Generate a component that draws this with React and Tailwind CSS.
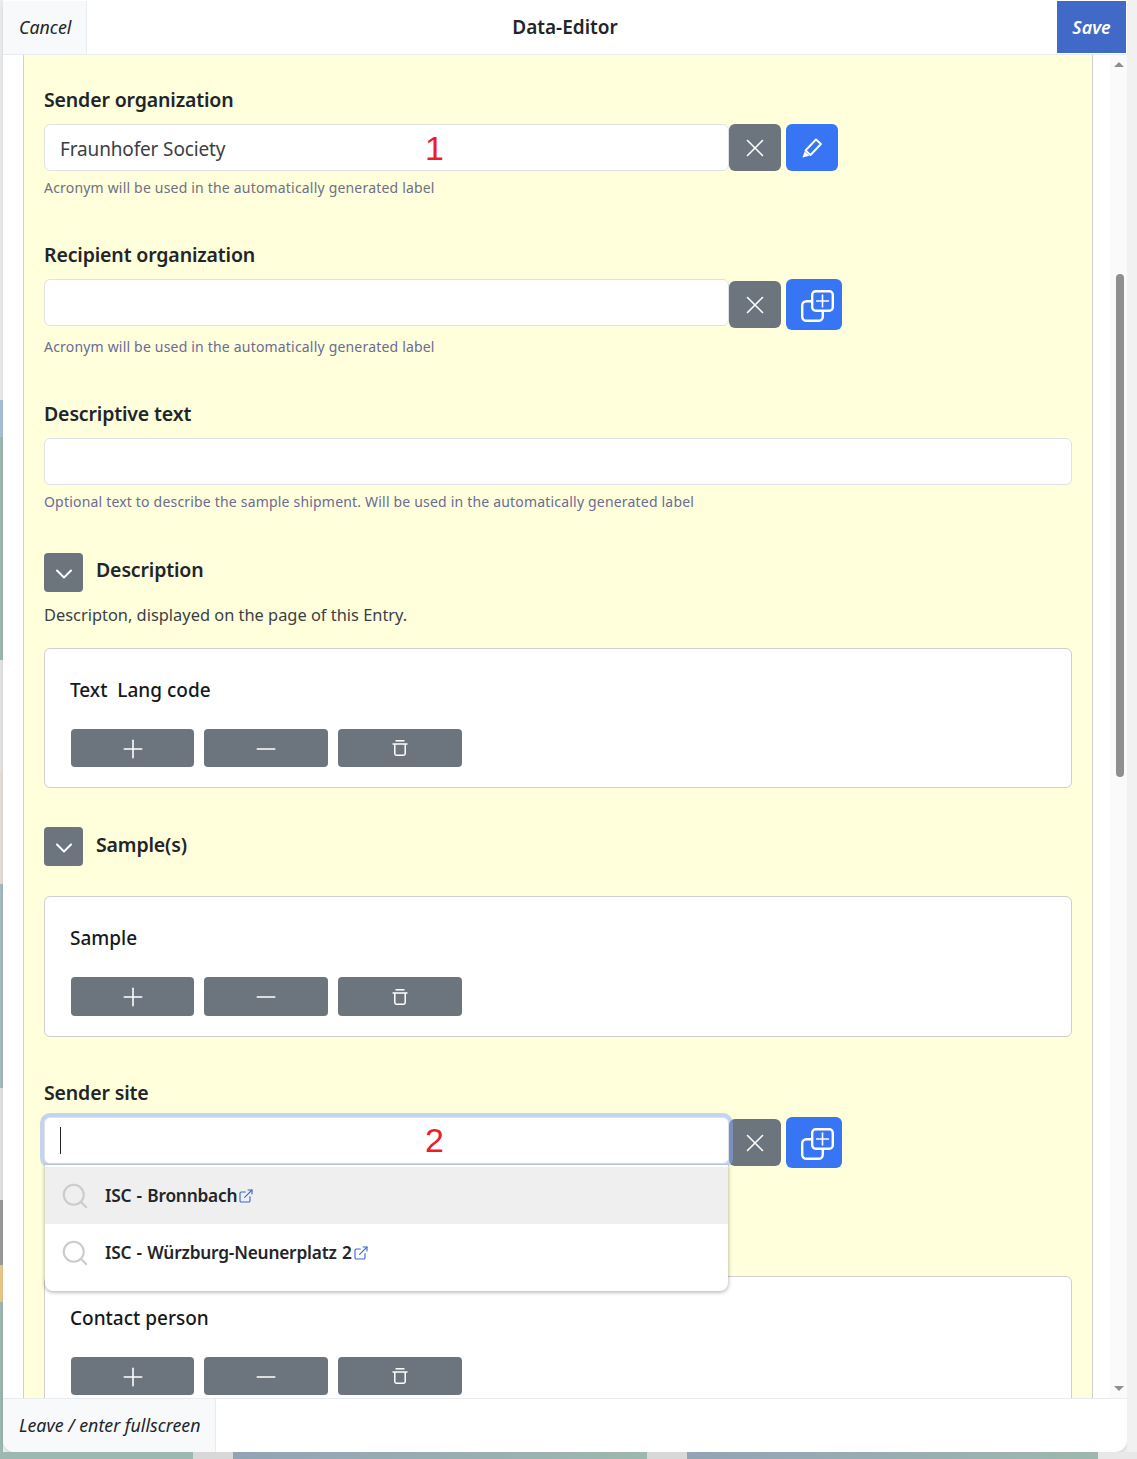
import React from "react";
import { Search, ExternalLink, X, Plus, Minus, ChevronDown } from "lucide-react";

const font = { fontFamily: '"Noto Sans", "Open Sans", sans-serif' };

const CopyPlusIcon = () => (
  <svg width="34" height="34" viewBox="0 0 34 34" fill="none" stroke="white" strokeWidth="2.4" className="ml-2 mt-[3px]">
    <rect x="11.2" y="2.2" width="20.6" height="19.6" rx="3.5" />
    <path d="M21.5 5.5v13M15 12h13" strokeWidth="1.6" />
    <path d="M10 12.2H5.5A4.3 4.3 0 0 0 1.2 16.5V27.5A4.3 4.3 0 0 0 5.5 31.8H17.5A4.3 4.3 0 0 0 21.8 27.5V23" />
  </svg>
);

const PencilIcon = () => (
  <svg width="22" height="22" viewBox="0 0 22 22" fill="none" stroke="white" strokeWidth="1.9">
    <path d="M15 2.5 20 7 9.5 18 4.5 13.5Z" strokeLinejoin="round" />
    <path d="M3.6 14.6 1.4 20.4 8.4 18.8Z" fill="white" stroke="none" />
  </svg>
);

const TrashIcon = () => (
  <svg width="18" height="18" viewBox="0 0 18 18" fill="none" stroke="white" strokeWidth="1.5">
    <path d="M4.5 1.8h9" />
    <path d="M1.5 5h15" />
    <path d="M3.8 5v9.6c0 1 .6 1.6 1.6 1.6h7.2c1 0 1.6-.6 1.6-1.6V5" />
  </svg>
);

const Label = ({ children, className = "" }) => (
  <div className={`h-6 text-[19.5px] leading-6 font-semibold text-[#212529] tracking-[-0.15px] ${className}`}>
    {children}
  </div>
);

const Helper = ({ children, className = "" }) => (
  <div className={`h-[18px] mt-[7px] text-[14px] leading-[20px] tracking-[0.19px] ${className}`}>{children}</div>
);

const ClearButton = ({ className = "" }) => (
  <button className={`flex items-center justify-center w-[52px] h-[47px] bg-[#6c757d] rounded-md text-white shrink-0 ${className}`}>
    <X size={30} strokeWidth={1.3} />
  </button>
);

const AddButton = () => (
  <button className="flex items-center justify-center w-[56px] h-[51px] ml-[5px] bg-[#3775f5] rounded-md shrink-0">
    <CopyPlusIcon />
  </button>
);

const TextInput = ({ children, className = "" }) => (
  <div className={`relative flex items-center w-[685px] h-[47px] pl-[15px] pt-[4px] bg-white border border-[#dee2e6] rounded-md text-[19px] tracking-[-0.15px] text-[#3a3f44] shrink-0 ${className}`}>
    {children}
  </div>
);

const Marker = ({ children, className = "" }) => (
  <span className={`absolute left-[380px] top-1/2 -translate-y-1/2 text-[34px] leading-none text-[#ee1c25] ${className}`} style={{ fontFamily: '"Liberation Sans", sans-serif' }}>
    {children}
  </span>
);

const ToolButtons = ({ tall }) => {
  const base = `flex items-center justify-center bg-[#6c757d] rounded-[4px] text-white ${tall ? "h-[39px]" : "h-[38px]"}`;
  return (
    <div className="flex mt-[27px] ml-[26px]">
      <button className={`${base} w-[123px]`}><Plus size={30} strokeWidth={1.25} className="mt-px" /></button>
      <button className={`${base} w-[124px] ml-[10px]`}><Minus size={30} strokeWidth={1.25} className="mt-px" /></button>
      <button className={`${base} w-[124px] ml-[10px]`}><TrashIcon /></button>
    </div>
  );
};

const Card = ({ title, tall, className = "" }) => (
  <div className={`w-[1028px] ${tall ? "h-[141px]" : "h-[140px]"} pt-[29px] bg-white border border-[#cfcfcf] rounded-md shrink-0 ${className}`}>
    <div className="h-6 pl-[25px] text-[19px] leading-6 font-medium text-[#16181b]">{title}</div>
    <ToolButtons tall={tall} />
  </div>
);

const Toggle = ({ label, className = "", labelClassName = "mt-[5px]" }) => (
  <div className={`flex ${className}`}>
    <button className="flex items-center justify-center w-[39px] h-[39px] bg-[#6c757d] rounded-[4px] text-white">
      <ChevronDown size={28} strokeWidth={1.7} className="mt-[2px]" />
    </button>
    <Label className={`ml-[13px] ${labelClassName}`}>{label}</Label>
  </div>
);

const Suggestion = ({ text, className = "" }) => (
  <div className={`flex items-center h-[57px] pl-[15px] ${className}`}>
    <Search size={30} strokeWidth={1.7} className="text-[#cccccc]" />
    <span className="ml-[15px] text-[17.3px] font-semibold text-[#212529] tracking-[-0.2px] [word-spacing:1px]">{text}</span>
    <ExternalLink size={16} strokeWidth={1.7} className="ml-px text-[#4169c8]" />
  </div>
);

const App = () => (
  <div className="flex flex-col w-[1137px] h-[1459px] overflow-hidden bg-[#f1f1f1]" style={font}>
    <div className="flex h-[1452px] shrink-0">
      {/* page behind the dialog */}
      <div className="flex flex-col w-[3px] shrink-0">
        <div className="h-[400px] bg-[#ececec]" />
        <div className="h-[37px] bg-[#a9c0d8]" />
        <div className="h-[223px] bg-[#9db8b2]" />
        <div className="h-[112px] bg-[#e4e4e4]" />
        <div className="h-[112px] bg-[#e6ddd8]" />
        <div className="h-[204px] bg-[#a4bcc0]" />
        <div className="h-[112px] bg-[#e2e2e2]" />
        <div className="h-[65px] bg-[#9a9a9a]" />
        <div className="h-[37px] bg-[#e8c98a]" />
        <div className="flex-1 bg-[#9db8b2]" />
      </div>

      <div className="flex flex-col w-[1124px] h-full bg-white rounded-b-xl overflow-hidden shadow-md">
        <div className="flex items-stretch h-[55px] pt-px border-b border-[#e9ecef] shrink-0">
          <div className="flex items-center w-[84px] pl-4 bg-[#f8f9fa] border-r border-[#e9ecef] text-[17.8px] italic text-[#212529]">
            Cancel
          </div>
          <div className="flex-1 flex items-center justify-center pr-[14px] text-[19px] font-semibold text-[#212529]">
            Data-Editor
          </div>
          <div className="flex items-center justify-center w-[69px] h-[52px] mr-px bg-[#4169c8] text-[18px] font-semibold italic text-white">
            Save
          </div>
        </div>

        <div className="flex flex-1 min-h-0 overflow-hidden">
          <div className="flex-1 min-w-0 pl-5 pr-[17px]">
            <div className="h-full pt-[33px] pl-5 bg-[#ffffdc] border-x border-[#cfcfcf] overflow-hidden">
              <Label>Sender organization</Label>
              <div className="flex mt-3">
                <TextInput>
                  Fraunhofer Society
                  <Marker>1</Marker>
                </TextInput>
                <ClearButton />
                <button className="flex items-center justify-center w-[52px] h-[47px] ml-[5px] bg-[#3775f5] rounded-md shrink-0">
                  <PencilIcon />
                </button>
              </div>
              <Helper className="text-[#6f7080]">Acronym will be used in the automatically generated label</Helper>

              <Label className="mt-[47px]">Recipient organization</Label>
              <div className="flex mt-3">
                <TextInput />
                <ClearButton className="mt-[2px]" />
                <AddButton />
              </div>
              <Helper className="text-[#6b6b94]">Acronym will be used in the automatically generated label</Helper>

              <Label className="mt-[47px]">Descriptive text</Label>
              <TextInput className="w-[1028px] mt-3" />
              <Helper className="text-[#6b6b94]">Optional text to describe the sample shipment. Will be used in the automatically generated label</Helper>

              <Toggle label="Description" className="mt-[43px]" />
              <div className="h-6 mt-[11px] text-[16.4px] leading-6 text-[#3a3f44]">Descripton, displayed on the page of this Entry.</div>
              <Card title="Text  Lang code" className="mt-[21px] whitespace-pre" />

              <Toggle label="Sample(s)" className="mt-[39px]" labelClassName="mt-[6px]" />
              <Card title="Sample" tall className="mt-[30px]" />

              <Label className="mt-[44px]">Sender site</Label>
              <div className="relative flex mt-3">
                <TextInput className="border-[#86b7fe] ring-4 ring-[#8aaaff]/50 z-10">
                  <span className="w-px h-[27px] -mt-[5px] bg-[#212529]" />
                  <Marker className="-mt-px">2</Marker>
                </TextInput>
                <ClearButton className="mt-[2px]" />
                <AddButton />
                <div className="absolute left-px top-[48px] z-20 w-[683px] h-[126px] pt-[2px] bg-white rounded-b-lg shadow-[0_1px_4px_rgba(0,0,0,0.35)]">
                  <Suggestion text="ISC - Bronnbach" className="bg-[#efefef]" />
                  <Suggestion text="ISC - Würzburg-Neunerplatz 2" />
                </div>
              </div>

              <Card title="Contact person" className="mt-[108px]" />
            </div>
          </div>

          <div className="flex flex-col items-center justify-between w-[17px] pt-[7px] pb-[7px] bg-[#fafafa] shrink-0">
            <div className="w-0 h-0 ml-px border-x-[5px] border-x-transparent border-b-[5px] border-b-[#8f8f8f]" />
            <div className="w-2 h-[503px] mt-[204px] mb-[606px] ml-[3px] bg-[#8f8f8f] rounded-full" />
            <div className="w-0 h-0 ml-px border-x-[5px] border-x-transparent border-t-[5px] border-t-[#8f8f8f]" />
          </div>
        </div>

        <div className="flex h-[54px] border-t border-[#e9ecef] shrink-0">
          <div className="flex items-center w-[213px] pl-4 bg-[#f8f9fa] border-r border-[#e9ecef] text-[17.8px] italic text-[#212529]">
            Leave / enter fullscreen
          </div>
        </div>
      </div>

      <div className="w-[10px] bg-[#f1f1f1] shrink-0" />
    </div>

    <div className="flex h-[7px] shrink-0">
      <div className="w-[193px] bg-[#9db8b0]" />
      <div className="w-[40px] bg-[#d8d8d8]" />
      <div className="w-[414px] bg-linear-to-r from-[#93a3b5] to-[#9db8ae]" />
      <div className="w-[40px] bg-[#d8d8d8]" />
      <div className="w-[411px] bg-linear-to-r from-[#93a3b5] to-[#9db8ae]" />
      <div className="flex-1 bg-[#e8e8e8]" />
    </div>
  </div>
);

export default App;
